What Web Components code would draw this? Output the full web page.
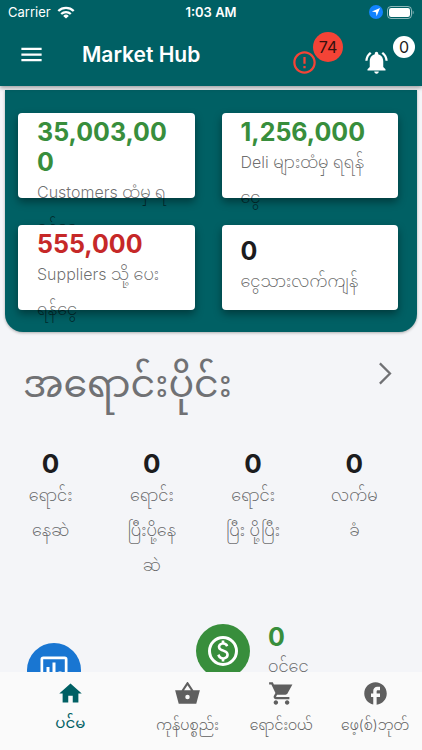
<!DOCTYPE html>
<html lang="my">
<head>
<meta charset="utf-8">
<meta name="viewport" content="width=device-width, initial-scale=1">
<title>Market Hub</title>
<style>
html, body { margin: 0; height: 100%; }
body {
  --teal: #006064; --green: #388e3c; --red: #c62828; --ink: #1c1c1e; --muted: rgba(0,0,0,.58);
  font-family: Inter, "Noto Sans Myanmar", "Noto Sans", sans-serif;
  font-size: 16px; color: var(--ink); background: #f4f5f8;
}
</style>
</head>
<body>
<market-app>
  <status-bar slot="header"></status-bar>
  <app-bar slot="header">Market Hub
    <badge-button slot="actions" icon="error" count="74" label="Alerts" tone="alert"></badge-button>
    <badge-button slot="actions" icon="bell" count="0" label="Notifications"></badge-button>
  </app-bar>

  <summary-panel>
    <summary-card tone="green" value="35,003,000">Customers ထံမှ ရ<br>ရန်ငွေ</summary-card>
    <summary-card tone="green" value="1,256,000">Deli များထံမှ ရရန်<br>ငွေ</summary-card>
    <summary-card tone="red" value="555,000">Suppliers သို့ ပေး<br>ရန်ငွေ</summary-card>
    <summary-card value="0">ငွေသားလက်ကျန်</summary-card>
  </summary-panel>

  <section-heading>အရောင်းပိုင်း</section-heading>

  <stat-row>
    <stat-tile value="0">ရောင်း<br>နေဆဲ</stat-tile>
    <stat-tile value="0">ရောင်း<br>ပြီးပို့နေ<br>ဆဲ</stat-tile>
    <stat-tile value="0">ရောင်း<br>ပြီး ပို့ပြီး</stat-tile>
    <stat-tile value="0">လက်မ<br>ခံ</stat-tile>
  </stat-row>

  <finance-row value="0">ဝင်ငွေ</finance-row>

  <bottom-nav slot="footer">
    <nav-item icon="home" href="#home" active>ပင်မ</nav-item>
    <nav-item icon="basket" href="#products">ကုန်ပစ္စည်း</nav-item>
    <nav-item icon="cart" href="#trade">ရောင်းဝယ်</nav-item>
    <nav-item icon="facebook" href="#facebook">ဖေ့(စ်)ဘုတ်</nav-item>
  </bottom-nav>
</market-app>

<script>
const ICONS = {
  menu: '<path d="M3 18h18v-2H3v2zm0-5h18v-2H3v2zm0-7v2h18V6H3z"/>',
  error: '<path d="M11 15h2v2h-2zm0-8h2v6h-2zm.99-5C6.47 2 2 6.48 2 12s4.47 10 9.99 10C17.52 22 22 17.52 22 12S17.52 2 11.99 2zM12 20c-4.42 0-8-3.58-8-8s3.58-8 8-8 8 3.58 8 8-3.58 8-8 8z"/>',
  bell: '<path d="M7.58 4.08L6.15 2.65C3.75 4.48 2.17 7.3 2.03 10.5h2c.15-2.65 1.51-4.97 3.55-6.42zm12.39 6.42h2c-.15-3.2-1.73-6.02-4.12-7.85l-1.42 1.43c2.02 1.45 3.39 3.77 3.54 6.42zM18 11c0-3.07-1.64-5.64-4.5-6.32V4c0-.83-.67-1.5-1.5-1.5s-1.5.67-1.5 1.5v.68C7.63 5.36 6 7.92 6 11v5l-2 2v1h16v-1l-2-2v-5zm-6 11c.14 0 .27-.01.4-.04.65-.14 1.18-.58 1.44-1.18.1-.24.15-.5.15-.78h-4c.01 1.1.9 2 2.01 2z"/>',
  chevron: '<path d="M7 3l9 9-9 9" fill="none" stroke="currentColor" stroke-width="2"/>',
  home: '<path d="M10 20v-6h4v6h5v-8h3L12 3 2 12h3v8z"/>',
  basket: '<path fill-rule="evenodd" d="M17.21 9l-4.83-7.2h-.76L6.79 9H1l3.2 12h15.6L23 9zM9 9l3-4.4L15 9zM12 17a2 2 0 1 1 0-4 2 2 0 0 1 0 4z"/>',
  cart: '<path d="M7 18c-1.1 0-1.99.9-1.99 2S5.9 22 7 22s2-.9 2-2-.9-2-2-2zM1 2v2h2l3.6 7.59-1.35 2.45c-.16.28-.25.61-.25.96 0 1.1.9 2 2 2h12v-2H7.42c-.14 0-.25-.11-.25-.25l.03-.12.9-1.63h7.45c.75 0 1.41-.41 1.75-1.03L21.7 4H5.21l-.94-2H1zm16 16c-1.1 0-1.99.9-1.99 2s.89 2 1.99 2 2-.9 2-2-.9-2-2-2z"/>',
  facebook: '<path d="M22 12c0-5.52-4.48-10-10-10S2 6.48 2 12c0 4.84 3.44 8.87 8 9.8V15H8v-3h2V9.5C10 7.57 11.57 6 13.5 6H16v3h-2c-.55 0-1 .45-1 1v2h3v3h-3v6.95c5.05-.5 9-4.76 9-9.95z"/>',
  chart: '<rect x="3.9" y="3.9" width="16.2" height="16.2" rx="1" fill="none" stroke="currentColor" stroke-width="1.8"/><path d="M7 10h2v7H7zm4-3h2v10h-2zm4 6h2v4h-2z"/>',
  dollar: '<path fill-rule="evenodd" d="M12 2a10 10 0 1 0 0 20 10 10 0 0 0 0-20zm0 18a8 8 0 1 1 0-16 8 8 0 0 1 0 16z"/><path d="M12.88 17.76V19h-1.75v-1.29c-.74-.18-2.39-.77-3.02-2.96l1.65-.67c.06.22.58 2.09 2.4 2.09.93 0 1.98-.48 1.98-1.61 0-.96-.7-1.46-2.28-2.03-1.1-.39-3.35-1.03-3.35-3.31 0-.1.01-2.4 2.62-2.96V5h1.75v1.24c1.84.32 2.51 1.79 2.66 2.23l-1.58.67c-.11-.35-.59-1.34-1.9-1.34-.7 0-1.81.37-1.81 1.39 0 .95.86 1.31 2.64 1.9 2.4.83 3.01 2.05 3.01 3.45 0 2.63-2.5 3.13-3.02 3.22z"/>'
};

class Base extends HTMLElement {
  constructor() {
    super();
    this.attachShadow({ mode: 'open' });
  }
  connectedCallback() {
    this.shadowRoot.innerHTML = this.render();
  }
  attr(name) { return this.getAttribute(name) || ''; }
}

customElements.define('app-icon', class extends Base {
  render() {
    return `<style>
      :host { display: block; width: 27px; height: 27px; flex: none; }
      svg { display: block; width: 100%; height: 100%; fill: currentColor; }
    </style><svg viewBox="0 0 24 24" aria-hidden="true">${ICONS[this.attr('name')]}</svg>`;
  }
});

customElements.define('market-app', class extends Base {
  render() {
    return `<style>
      :host { display: flex; flex-direction: column; height: 100vh; }
      header { background: var(--teal); color: #fff; box-shadow: 0 2px 4px rgba(0,0,0,.35); z-index: 1; }
      main { flex: 1; min-height: 0; overflow: hidden; padding-top: 4px; }
    </style>
    <header><slot name="header"></slot></header>
    <main><slot></slot></main>
    <slot name="footer"></slot>`;
  }
});

customElements.define('status-bar', class extends Base {
  render() {
    return `<style>
      :host { display: grid; grid-template-columns: 1fr auto 1fr; align-items: center; height: 24px; padding: 0 8px; font-size: 13px; }
      .left, .right { display: flex; align-items: center; gap: 6px; }
      .right { justify-content: flex-end; gap: 4px; }
      b { font-weight: 600; }
      svg { display: block; }
    </style>
    <span class="left">Carrier
      <svg width="18" height="13" viewBox="0 0 18 13" fill="none" stroke="#fff" stroke-width="2.3" aria-hidden="true">
        <path d="M1.3 5a11 11 0 0 1 15.4 0M4.2 8a7 7 0 0 1 9.6 0"/><path d="M9 12.6L6.2 9.9a4 4 0 0 1 5.6 0z" fill="#fff" stroke="none"/>
      </svg>
    </span>
    <b>1:03 AM</b>
    <span class="right">
      <svg width="14" height="14" viewBox="0 0 14 14" aria-hidden="true"><circle cx="7" cy="7" r="7" fill="#1283ff"/><path d="M11 3L7.6 11.2 6.9 7.2 2.9 6.4z" fill="#fff"/></svg>
      <svg width="27" height="13" viewBox="0 0 27 13" aria-hidden="true"><rect x=".5" y=".5" width="24" height="12" rx="3.5" fill="none" stroke="#fff" stroke-opacity=".55"/><rect x="2" y="2" width="21" height="9" rx="2.2" fill="#fff"/><path d="M25.7 4.5c1.3.5 1.3 3.5 0 4z" fill="#fff" opacity=".55"/></svg>
    </span>`;
  }
});

customElements.define('app-bar', class extends Base {
  render() {
    return `<style>
      :host { display: flex; align-items: center; height: 62px; padding: 0 7px 0 18px; }
      button { border: 0; padding: 0 0 2px; background: none; color: inherit; }
      h1 { flex: 1; margin: 0 0 0 37px; font-size: 21px; line-height: 28px; font-weight: 600; }
      .actions { display: flex; gap: 20px; }
    </style>
    <button aria-label="Menu"><app-icon name="menu"></app-icon></button>
    <h1><slot></slot></h1>
    <div class="actions"><slot name="actions"></slot></div>`;
  }
});

customElements.define('badge-button', class extends Base {
  render() {
    return `<style>
      :host { display: block; }
      button { position: relative; display: block; width: 52px; height: 44px; padding: 16px 0 1px; border: 0; background: none; color: #fff; font: inherit; }
      .badge { position: absolute; top: 3px; right: 0; box-sizing: border-box; width: 22px; height: 22px; border-radius: 50%; background: #fff; color: #222; font-size: 16px; line-height: 22px; text-align: center; }
      :host([tone=alert]) button { color: #f44336; }
      :host([tone=alert]) .badge { top: -1px; width: 30px; height: 30px; line-height: 30px; background: #f44336; color: #35100d; }
    </style>
    <button aria-label="${this.attr('label')}"><app-icon name="${this.attr('icon')}"></app-icon><span class="badge">${this.attr('count')}</span></button>`;
  }
});

customElements.define('summary-panel', class extends Base {
  render() {
    return `<style>
      :host { display: grid; grid-template-columns: 1fr 1fr; grid-auto-rows: 85px; gap: 27px; margin: 0 5px; padding: 23px 19px 22px 13px; background: var(--teal); border-radius: 0 0 18px 18px; box-shadow: 0 1px 3px rgba(0,0,0,.3); }
    </style><slot></slot>`;
  }
});

customElements.define('summary-card', class extends Base {
  render() {
    return `<style>
      :host { display: flex; flex-direction: column; justify-content: safe center; box-sizing: border-box; min-width: 0; padding: 4px 18px 4px 19px; isolation: isolate; background: #fff; border-radius: 4px; box-shadow: 0 4px 8px rgba(0,0,0,.4); }
      strong { font-size: 25px; line-height: 30px; font-weight: 650; overflow-wrap: anywhere; }
      p { margin: -2px 0 0; font-size: 16px; line-height: 35px; font-weight: 350; color: var(--muted); white-space: nowrap; }
      :host([tone=green]) strong { color: var(--green); }
      :host([tone=red]) strong { color: var(--red); }
    </style><strong>${this.attr('value')}</strong><p><slot></slot></p>`;
  }
});

customElements.define('section-heading', class extends Base {
  render() {
    return `<style>
      :host { display: flex; justify-content: space-between; align-items: flex-start; margin: 16px 23px 0; color: #707174; }
      h2 { margin: 0; font-size: 38px; line-height: 70px; font-weight: 400; white-space: nowrap; }
      button { border: 0; padding: 12px 0; background: none; color: inherit; }
    </style><h2><slot></slot></h2><button aria-label="Open"><app-icon name="chevron"></app-icon></button>`;
  }
});

customElements.define('stat-row', class extends Base {
  render() {
    return `<style>
      :host { display: grid; grid-template-columns: repeat(4, 1fr); min-height: 175px; margin: 30px 17px 0 0; }
    </style><slot></slot>`;
  }
});

customElements.define('stat-tile', class extends Base {
  render() {
    return `<style>
      :host { display: block; text-align: center; }
      strong { display: block; font-size: 26px; line-height: 32px; font-weight: 650; }
      p { margin: -2px 0 0; font-size: 16px; line-height: 35px; font-weight: 350; color: var(--muted); white-space: nowrap; }
    </style><strong>${this.attr('value')}</strong><p><slot></slot></p>`;
  }
});

customElements.define('finance-row', class extends Base {
  render() {
    return `<style>
      :host { display: grid; grid-template-columns: 2fr 3fr; align-items: start; padding-left: 27px; }
      .disc { display: grid; place-items: center; width: 54px; height: 54px; border-radius: 50%; color: #fff; background: #1976d2; margin-top: 20px; }
      .green { background: var(--green); margin-top: 1px; }
      .income { display: flex; gap: 18px; margin-left: 11px; }
      app-icon { width: 36px; height: 36px; }
      strong { display: block; font-size: 25px; line-height: 28px; font-weight: 650; color: var(--green); }
      p { margin: -2px 0 0; font-size: 16px; line-height: 35px; font-weight: 350; color: var(--muted); white-space: nowrap; }
    </style>
    <div class="disc"><app-icon name="chart"></app-icon></div>
    <div class="income"><div class="disc green"><app-icon name="dollar"></app-icon></div>
    <div><strong>${this.attr('value')}</strong><p><slot></slot></p></div></div>`;
  }
});

customElements.define('bottom-nav', class extends Base {
  render() {
    return `<style>
      :host { display: block; background: #fafafa; z-index: 1; }
      nav { display: grid; grid-template-columns: 3fr 2fr 2fr 2fr; height: 78px; }
    </style><nav><slot></slot></nav>`;
  }
});

customElements.define('nav-item', class extends Base {
  render() {
    return `<style>
      :host { display: block; min-width: 0; }
      a { display: flex; flex-direction: column; align-items: center; padding-top: 8px; color: #5f5f5f; text-decoration: none; font-size: 14px; line-height: 36px; font-weight: 350; white-space: nowrap; }
      :host([active]) a { color: var(--teal); font-size: 15px; line-height: 32px; font-weight: 400; }
    </style><a href="${this.attr('href')}"><app-icon name="${this.attr('icon')}"></app-icon><span><slot></slot></span></a>`;
  }
});
</script>
</body>
</html>
